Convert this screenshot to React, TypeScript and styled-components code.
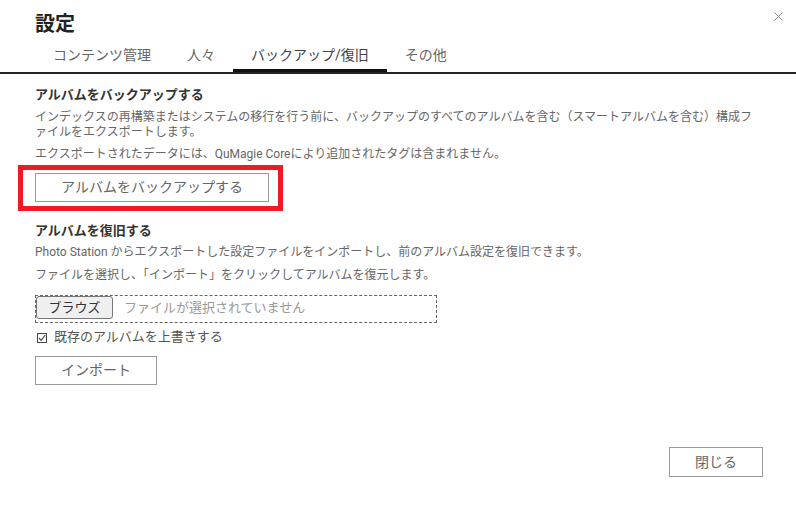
import React from "react";
import styled, { createGlobalStyle } from "styled-components";

const Global = createGlobalStyle`
  html, body { margin: 0; padding: 0; background: #fff; }
  body { font-family: Roboto, "Noto Sans CJK JP", sans-serif; }
  * { box-sizing: border-box; }
`;

const Dialog = styled.div`
  width: 796px;
  height: 506px;
  background: #fff;
  display: flex;
  flex-direction: column;
`;

const Header = styled.div`
  display: flex;
  justify-content: space-between;
  align-items: flex-start;
  padding: 10px 13px 0 35px;
`;

const Title = styled.h1`
  margin: 0;
  font-size: 20px;
  line-height: 29px;
  font-weight: 700;
  color: #222;
`;

const CloseX = styled.button`
  border: none;
  background: none;
  padding: 0;
  margin-top: 2px;
  width: 9px;
  height: 9px;
  display: block;
  cursor: pointer;
  svg { display: block; }
`;

const TabBar = styled.div`
  display: flex;
  padding-left: 35px;
  border-bottom: 2px solid #222;
`;

const Tab = styled.div<{ $active?: boolean }>`
  height: 33px;
  padding: 2px 18px 0;
  font-size: 14px;
  line-height: 28px;
  color: ${(p) => (p.$active ? "#444" : "#666")};
  border-bottom: 3px solid ${(p) => (p.$active ? "#111" : "transparent")};
  white-space: nowrap;
`;

const Content = styled.div`
  padding: 12px 35px 0;
  display: flex;
  flex-direction: column;
  align-items: flex-start;
`;

const Heading = styled.h2<{ $mt?: number }>`
  margin: ${(p) => p.$mt ?? 0}px 0 0;
  font-size: 13px;
  line-height: 18px;
  font-weight: 700;
  color: #333;
`;

const Para = styled.p<{ $mt: number }>`
  margin: ${(p) => p.$mt}px 0 0;
  font-size: 12px;
  line-height: 15px;
  color: #666;
  width: 100%;
`;

const Highlight = styled.div`
  position: relative;
  margin-top: 11px;
`;

const RedFrame = styled.div`
  position: absolute;
  top: -8px;
  left: -17px;
  right: -14px;
  bottom: -9px;
  border: 5px solid #ec1c24;
  pointer-events: none;
`;

const OutlineButton = styled.button<{ $w: number; $mt?: number }>`
  display: block;
  width: ${(p) => p.$w}px;
  height: 29px;
  margin: ${(p) => p.$mt ?? 0}px 0 0;
  padding: 0;
  border: 1px solid #9a9a9a;
  background: #fff;
  color: #666;
  font-family: inherit;
  font-size: 14px;
  line-height: 27px;
  text-align: center;
`;

const FileBox = styled.div`
  margin-top: 12px;
  width: 402px;
  height: 28px;
  border: 1px dashed #666;
  display: flex;
  align-items: flex-start;
  gap: 11px;
`;

const BrowseButton = styled.button`
  width: 77px;
  height: 23px;
  margin: 0;
  padding: 0;
  border: 1px solid #767676;
  border-radius: 3px;
  background: #efefef;
  color: #333;
  font-family: inherit;
  font-size: 13px;
  line-height: 21px;
`;

const FileName = styled.span`
  font-size: 13px;
  line-height: 23px;
  color: #999;
`;

const CheckRow = styled.label`
  margin-top: 5px;
  display: flex;
  align-items: center;
  gap: 7px;
  padding-left: 2px;
  font-size: 13px;
  line-height: 18px;
  color: #555;
  svg { display: block; margin-top: 2px; }
`;

const Footer = styled.div`
  margin-top: auto;
  display: flex;
  justify-content: flex-end;
  padding: 0 33px 29px;
`;

const CloseButton = styled(OutlineButton)`
  height: 30px;
  line-height: 28px;
`;

export default function App() {
  return (
    <>
      <Global />
      <Dialog>
        <Header>
          <Title>設定</Title>
          <CloseX aria-label="close">
            <svg width="9" height="9" viewBox="0 0 9 9">
              <path d="M0.5 0.5 L8.5 8.5 M8.5 0.5 L0.5 8.5" stroke="#8a8a8a" strokeWidth="1" fill="none" />
            </svg>
          </CloseX>
        </Header>
        <TabBar>
          <Tab>コンテンツ管理</Tab>
          <Tab>人々</Tab>
          <Tab $active>バックアップ/復旧</Tab>
          <Tab>その他</Tab>
        </TabBar>
        <Content>
          <Heading>アルバムをバックアップする</Heading>
          <Para $mt={6}>
            インデックスの再構築またはシステムの移行を行う前に、バックアップのすべてのアルバムを含む（スマートアルバムを含む）構成ファイルをエクスポートします。
          </Para>
          <Para $mt={7}>エクスポートされたデータには、QuMagie Coreにより追加されたタグは含まれません。</Para>
          <Highlight>
            <OutlineButton $w={234}>アルバムをバックアップする</OutlineButton>
            <RedFrame />
          </Highlight>
          <Heading $mt={20}>アルバムを復旧する</Heading>
          <Para $mt={5}>Photo Station からエクスポートした設定ファイルをインポートし、前のアルバム設定を復旧できます。</Para>
          <Para $mt={8}>ファイルを選択し、「インポート」をクリックしてアルバムを復元します。</Para>
          <FileBox>
            <BrowseButton>ブラウズ</BrowseButton>
            <FileName>ファイルが選択されていません</FileName>
          </FileBox>
          <CheckRow>
            <svg width="10" height="10" viewBox="0 0 10 10">
              <rect x="0.5" y="0.5" width="9" height="9" fill="none" stroke="#444" strokeWidth="1" />
              <path d="M2 5 L4.2 7.3 L8.2 2" stroke="#444" strokeWidth="1.1" fill="none" />
            </svg>
            既存のアルバムを上書きする
          </CheckRow>
          <OutlineButton $w={122} $mt={10}>インポート</OutlineButton>
        </Content>
        <Footer>
          <CloseButton $w={94}>閉じる</CloseButton>
        </Footer>
      </Dialog>
    </>
  );
}
